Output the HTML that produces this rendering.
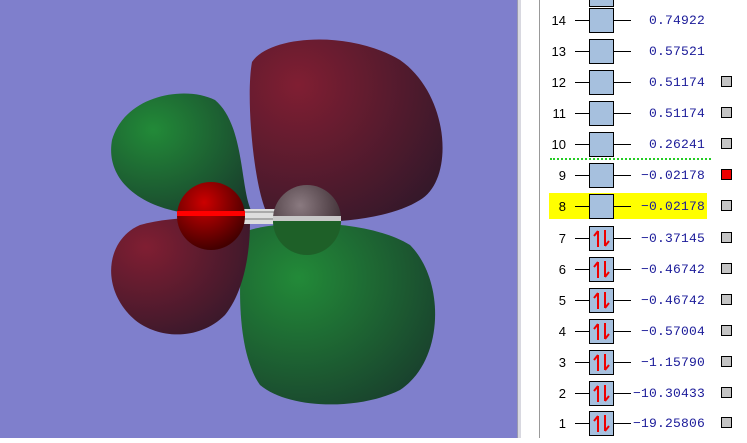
<!DOCTYPE html>
<html><head><style>
body{margin:0;width:747px;height:438px;overflow:hidden;background:#fff;font-family:"Liberation Mono",monospace;position:relative}
#left{position:absolute;left:0;top:0;width:517px;height:438px;background:#7f7fcc}
#sep{position:absolute;left:517px;top:0;width:3px;height:438px;background:#d8d8e0;border-left:1px solid #9a9ab0}
#vl{position:absolute;left:539px;top:0;width:1px;height:438px;background:#999}
.row{position:absolute;left:0;width:747px;height:26px}
.n{position:absolute;right:181px;top:5px;font-family:"Liberation Sans",sans-serif;font-size:13px;color:#000}
.ln{position:absolute;top:12px;height:1px;background:#000}
.box{position:absolute;left:589px;top:0;width:23px;height:23px;background:#a6c0de;border:1px solid #000}
.e{position:absolute;right:42px;top:5px;font-size:13px;color:#1a1a99;letter-spacing:0.2px}
.sq{position:absolute;left:721px;top:6px;width:9px;height:9px;background:#c4c4c4;border:1px solid #000}
.arr{position:absolute;left:0;top:0}
</style></head><body>
<div id="left">
<svg width="517" height="438">
<defs>
<radialGradient id="g" cx="0.3" cy="0.3" r="0.9"><stop offset="0" stop-color="#228a38"/><stop offset="1" stop-color="#183a2c"/></radialGradient>
<radialGradient id="r" cx="0.25" cy="0.25" r="0.9"><stop offset="0" stop-color="#801e32"/><stop offset="1" stop-color="#34182a"/></radialGradient>
<radialGradient id="o" cx="0.4" cy="0.3" r="0.7"><stop offset="0" stop-color="#c00"/><stop offset="1" stop-color="#400"/></radialGradient>
<radialGradient id="c" cx="0.4" cy="0.3" r="0.7"><stop offset="0" stop-color="#8a7a80"/><stop offset="1" stop-color="#3a2a30"/></radialGradient>
</defs>
<path d="M252 62 C270 35 350 30 400 60 C450 95 455 180 420 200 C380 225 300 225 270 218 C255 200 245 100 252 62Z" fill="url(#r)"/>
<path d="M245 232 C265 222 360 215 410 245 C445 280 445 360 400 390 C360 410 290 410 260 385 C235 350 238 270 245 232Z" fill="url(#g)"/>
<path d="M252 212 C240 190 245 125 215 100 C185 85 125 95 112 140 C105 180 140 205 180 212 C210 215 235 215 252 212Z" fill="url(#g)"/>
<path d="M250 222 C225 218 180 214 140 225 C105 240 100 290 135 320 C160 340 200 340 225 315 C245 290 250 250 250 222Z" fill="url(#r)"/>
<rect x="240" y="209" width="40" height="15" fill="#ddd"/>
<line x1="240" y1="212" x2="280" y2="212" stroke="#777" stroke-width="1"/>
<line x1="240" y1="219" x2="280" y2="219" stroke="#777" stroke-width="1"/>
<circle cx="211" cy="216" r="34" fill="url(#o)"/>
<rect x="177" y="211" width="68" height="5" fill="#f00"/>
<circle cx="307" cy="219" r="34" fill="url(#c)"/>
<path d="M273 221 A34 34 0 0 0 341 221Z" fill="#1e6028"/>
<rect x="273" y="216" width="68" height="5" fill="#c8c8c8"/>
</svg>
</div>
<div id="sep"></div>
<div id="vl"></div>
<div style="position:absolute;left:589px;top:-18px;width:23px;height:23px;background:#a6c0de;border:1px solid #000"></div>
<div style="position:absolute;left:549px;top:193px;width:158px;height:26px;background:#ffff00"></div>
<div style="position:absolute;left:550px;top:158px;width:161px;border-top:2px dotted #22cc22"></div>
<div id="rows"></div>
<script>
var d=[[14,"0.74922",8,0,0],[13,"0.57521",39,0,0],[12,"0.51174",70,1,0],[11,"0.51174",101,1,0],[10,"0.26241",132,1,0],[9,"-0.02178",163,2,0],[8,"-0.02178",194,1,0],[7,"-0.37145",226,1,1],[6,"-0.46742",257,1,1],[5,"-0.46742",288,1,1],[4,"-0.57004",319,1,1],[3,"-1.15790",350,1,1],[2,"-10.30433",381,1,1],[1,"-19.25806",411,1,1]];
var h="";
d.forEach(function(r){
h+='<div class="row" style="top:'+r[2]+'px"><span class="n">'+r[0]+'</span><div class="ln" style="left:575px;width:14px"></div><div class="ln" style="left:614px;width:17px"></div><div class="box">'+(r[4]?'<svg class="arr" width="23" height="23"><path d="M8 20V4M8 4L4 9" stroke="#e00" stroke-width="2" fill="none"/><path d="M15 3V19M15 19L19 14" stroke="#e00" stroke-width="2" fill="none"/></svg>':'')+'</div><span class="e">'+r[1].replace("-","\u2212")+'</span>'+(r[3]?'<div class="sq" style="'+(r[3]==2?'background:#e00':'')+'"></div>':'')+'</div>';
});
document.getElementById("rows").innerHTML=h;
</script>
</body></html>
